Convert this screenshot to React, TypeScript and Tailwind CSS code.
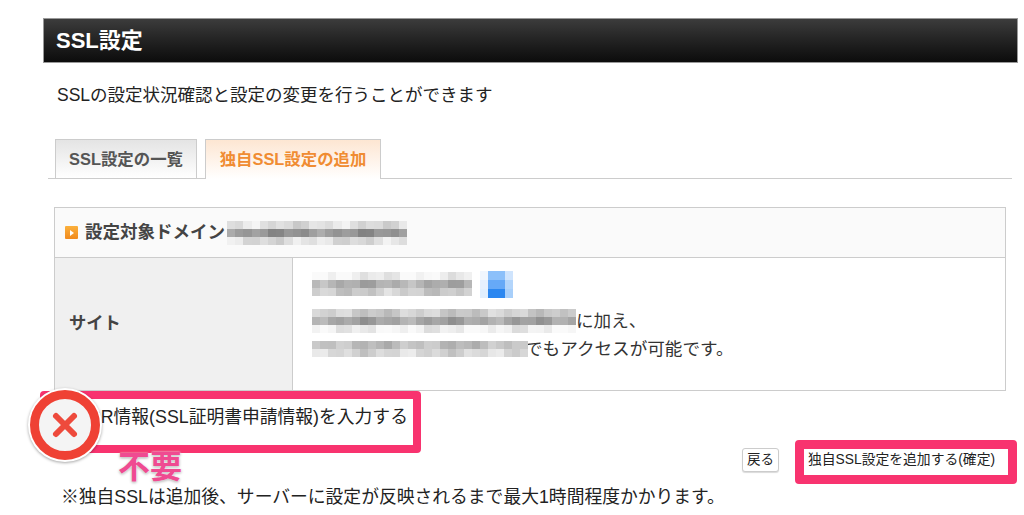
import React from 'react';

const font = { fontFamily: '"Liberation Sans", "Noto Sans CJK JP", sans-serif' };

// mosaic used for the masked domain names
const Mosaic: React.FC<{ cols: number; rows: number[]; cell?: number }> = ({ cols, rows, cell = 8 }) => (
  <div className="flex flex-col shrink-0 blur-[0.4px]">
    {rows.map((base, r) => (
      <div key={r} className="flex">
        {Array.from({ length: cols }).map((_, c) => {
          const wobble = Math.round((Math.sin(c * 1.7 + r * 5.1 + cols) + Math.sin(c * 0.6 + r)) * 12);
          const v = Math.min(250, Math.max(120, base + wobble));
          return <div key={c} style={{ width: cell, height: 8, background: `rgb(${v},${v},${v})` }} />;
        })}
      </div>
    ))}
  </div>
);

export default function App() {
  return (
    <div className="relative w-[1024px] h-[515px] overflow-hidden bg-white text-[#222]" style={font}>
      <div className="pt-[18px] pl-[43px] pr-[6px]">
        <div className="h-[45px] flex items-center pl-[12px] border border-[#999] bg-gradient-to-b from-[#3c3c3c] to-[#0c0c0c]">
          <h1 className="text-[22px] font-bold text-white">SSL設定</h1>
        </div>
        <p className="mt-[20px] ml-[14px] text-[17.5px] leading-[24px] text-[#222] whitespace-nowrap">SSLの設定状況確認と設定の変更を行うことができます</p>

        {/* tabs */}
        <div className="mt-[33px] ml-[5px] mr-[6px] h-[39px] flex items-end gap-[8px] pl-[7px] border-b border-[#ccc]">
          <div className="w-[142px] h-[39px] flex items-center justify-center border border-b-0 border-[#ccc] bg-gradient-to-b from-[#e4e4e4] to-white text-[16.4px] font-bold text-[#555] whitespace-nowrap">
            SSL設定の一覧
          </div>
          <div className="w-[176px] h-[40px] -mb-px flex items-center justify-center border border-b-0 border-[#ccc] bg-gradient-to-b from-[#fde6d2] to-white text-[16.4px] font-bold text-[#f08c32] whitespace-nowrap">
            独自SSL設定の追加
          </div>
        </div>

        {/* table */}
        <div className="mt-[28px] ml-[11px] mr-[12px] border border-[#ccc]">
          <div className="h-[50px] flex items-center pl-[10px] border-b border-[#ccc] bg-[#fafafa]">
            <span className="w-[13px] h-[13px] flex items-center justify-center rounded-[1px] bg-gradient-to-b from-[#fbb03b] to-[#f08a1d]">
              <span className="w-0 h-0 border-y-[3px] border-y-transparent border-l-[4px] border-l-white" />
            </span>
            <span className="ml-[7px] text-[17.5px] font-bold text-[#444] whitespace-nowrap">設定対象ドメイン</span>
            <span className="ml-[2px]"><Mosaic cols={22} rows={[222, 150, 222]} cell={8.2} /></span>
          </div>
          <div className="h-[132px] flex">
            <div className="w-[238px] shrink-0 flex items-center pl-[14px] bg-[#f0f0f0] border-r border-[#ccc] text-[17.3px] font-bold text-[#444]">
              サイト
            </div>
            <div className="flex-1 pl-[19px] pt-[12px] text-[17.6px] text-[#333]">
              <div className="flex items-end h-[28px]">
                <div className="mb-[2px]"><Mosaic cols={20} rows={[240, 175, 205]} /></div>
                <div className="ml-[8px] flex flex-col">
                  <div className="flex">
                    <div className="w-[8px] h-[9px] bg-[#f0f6fe]" />
                    <div className="w-[17px] h-[9px] bg-[#8cc0fa]" />
                    <div className="w-[8px] h-[9px] bg-[#cfe4fd]" />
                  </div>
                  <div className="flex">
                    <div className="w-[8px] h-[9px] bg-[#e6f0fe]" />
                    <div className="w-[17px] h-[9px] bg-[#66a9f7]" />
                    <div className="w-[8px] h-[9px] bg-[#b3d5fb]" />
                  </div>
                  <div className="flex">
                    <div className="w-[8px] h-[9px] bg-[#e1effe]" />
                    <div className="w-[17px] h-[9px] bg-[#2b87f0]" />
                    <div className="w-[8px] h-[9px] bg-[#a8cffa]" />
                  </div>
                </div>
              </div>
              <div className="mt-[11px] flex items-center h-[24px] whitespace-nowrap">
                <Mosaic cols={33} rows={[205, 165, 240]} />
                <span>に加え、</span>
              </div>
              <div className="mt-[4px] flex items-center h-[24px] whitespace-nowrap">
                <Mosaic cols={27} rows={[190, 215]} />
                <span className="ml-[-3px]">でもアクセスが可能です。</span>
              </div>
            </div>
          </div>
        </div>

        <p className="mt-[15px] ml-[33px] text-[17.8px] leading-[22px] text-[#222] whitespace-nowrap">CSR情報(SSL証明書申請情報)を入力する</p>

        <div className="mt-[20px] flex justify-end items-center pr-[10px]">
          <button className="w-[37px] h-[24px] rounded-[3px] border border-[#ccc] bg-white text-[13.5px] text-[#222] shadow-[0_1px_1px_rgba(0,0,0,0.15)]">戻る</button>
          <button className="ml-[25px] w-[204px] h-[24px] pl-[4px] text-left bg-white text-[13.8px] text-[#222] whitespace-nowrap">独自SSL設定を追加する(確定)</button>
        </div>
        <p className="mt-[14px] ml-[18px] text-[17.8px] leading-[22px] text-[#222] whitespace-nowrap">※独自SSLは追加後、サーバーに設定が反映されるまで最大1時間程度かかります。</p>
      </div>

      {/* annotations over the page */}
      <div className="absolute left-[40px] top-[391px] w-[381px] h-[62px] border-[8px] border-[#f8336f] rounded-[4px]" />
      <div className="absolute left-[795px] top-[440px] w-[222px] h-[44px] border-[9px] border-[#f8336f] rounded-[4px]" />
      <div className="absolute left-[28px] top-[388px] w-[74px] h-[74px] rounded-full bg-white shadow-[0_1px_3px_rgba(0,0,0,0.35)] flex items-center justify-center">
        <div className="w-[70px] h-[70px] rounded-full border-[9px] border-[#ef4134] bg-[#f4f4f4] flex items-center justify-center">
          <svg width="30" height="30" viewBox="0 0 30 30">
            <path d="M6 6 L24 24 M24 6 L6 24" stroke="#ee4a3c" strokeWidth="6" strokeLinecap="round" fill="none" />
          </svg>
        </div>
      </div>
      <div className="absolute left-[118px] top-[449px] text-[32px] leading-[36px] font-bold text-[#ef4b91] [text-shadow:0_0_2px_#fff,0_1px_3px_rgba(0,0,0,0.4)]">不要</div>
    </div>
  );
}
